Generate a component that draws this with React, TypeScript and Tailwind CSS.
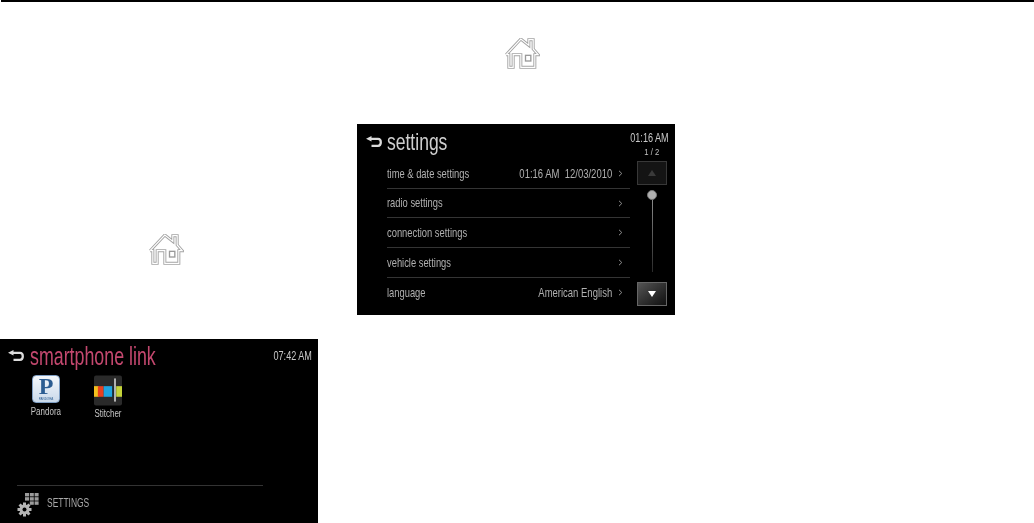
import React from 'react';

const sans = "font-['Liberation_Sans',Arial,sans-serif]";

function HomeIcon() {
  const outline = '2,50 46,3 70,22 70,5 83,5 83,33 98,50 88,50 88,88 46,88 46,50 23,50 23,88 10,88 10,50 2,50';
  return (
    <svg width="35" height="31" viewBox="0 0 102 93" fill="none" className="blur-[0.3px]">
      <polyline points={outline} stroke="#a3a3a3" strokeWidth="9" strokeLinejoin="miter" />
      <polyline points={outline} stroke="#ffffff" strokeWidth="3.5" strokeLinejoin="miter" />
      <rect x="60" y="52" width="16" height="17" stroke="#9a9a9a" strokeWidth="4" />
    </svg>
  );
}

function BackArrow() {
  return (
    <svg width="16" height="12" viewBox="0 0 16 12" fill="none" className="shrink-0">
      <path d="M0 2.8 L5.5 0 V5.6 Z" fill="#dcdcdc" />
      <path d="M4 2.8 H12 Q14.8 2.8 14.8 6.2 Q14.8 9.8 12 9.8 H5.5" stroke="#dcdcdc" strokeWidth="2.3" />
    </svg>
  );
}

function Chevron() {
  return (
    <svg width="5" height="7" viewBox="0 0 5 7" fill="none" className="shrink-0">
      <path d="M1 0.8 L3.8 3.5 L1 6.2" stroke="#8f8f8f" strokeWidth="1" />
    </svg>
  );
}

function PandoraIcon() {
  return (
    <div className="flex h-[28px] w-[28px] flex-col items-center rounded-[4px] border border-[#7f9fc4] bg-gradient-to-b from-[#f4f8fc] to-[#c9d9ea]">
      <span className="font-['Liberation_Serif',serif] text-[24px] leading-[21px] font-bold text-[#2b5d92]">P</span>
      <span className="w-full text-center text-[3px] leading-[4px] text-[#2b5d92]">PANDORA</span>
    </div>
  );
}

function StitcherIcon() {
  return (
    <svg width="28" height="31" viewBox="0 0 29 31">
      <rect width="29" height="31" rx="2" fill="#2a2a2a" />
      <rect y="11" width="5" height="11" fill="#f3c11e" />
      <rect x="4" y="11" width="6" height="11" fill="#e8401f" />
      <rect x="10" y="11" width="9" height="11" fill="#1fa5e0" />
      <rect x="19" y="11" width="3" height="11" fill="#1a2a33" />
      <rect x="23" y="11" width="6" height="11" fill="#c5d43a" />
      <rect x="21" y="3" width="1.5" height="24" fill="#e5e5e5" />
    </svg>
  );
}

function SettingsGlyph() {
  return (
    <svg width="22" height="24" viewBox="0 0 22 24" className="shrink-0">
      <g fill="#9c9c9c">
        <rect x="8" y="0" width="4" height="3.4" />
        <rect x="12.8" y="0" width="4" height="3.4" />
        <rect x="17.6" y="0" width="4" height="3.4" />
        <rect x="8" y="4.2" width="4" height="3.4" />
        <rect x="12.8" y="4.2" width="4" height="3.4" />
        <rect x="17.6" y="4.2" width="4" height="3.4" />
        <rect x="12.8" y="8.4" width="4" height="3.4" />
        <rect x="17.6" y="8.4" width="4" height="3.4" />
      </g>
      <g fill="#b5b5b5">
        <circle cx="7.5" cy="16.5" r="5" />
        <rect x="6" y="9.5" width="3" height="14" />
        <rect x="0.5" y="15" width="14" height="3" />
        <rect x="6" y="9.5" width="3" height="14" transform="rotate(45 7.5 16.5)" />
        <rect x="6" y="9.5" width="3" height="14" transform="rotate(-45 7.5 16.5)" />
      </g>
      <circle cx="7.5" cy="16.5" r="2" fill="#000" />
    </svg>
  );
}

const rows = [
  { label: 'time & date settings', value: '01:16 AM  12/03/2010' },
  { label: 'radio settings', value: '' },
  { label: 'connection settings', value: '' },
  { label: 'vehicle settings', value: '' },
  { label: 'language', value: 'American English' },
];

function SettingsPanel() {
  return (
    <div className={`flex h-[191px] w-[318px] bg-black blur-[0.5px] ${sans}`}>
      <div className="w-[275px]">
        <div className="flex h-[35px] items-center gap-[5px] pl-[9px]">
          <BackArrow />
          <h1 className="origin-left scale-x-[0.73] text-[24px] leading-[32px] whitespace-nowrap text-[#cfcfcf]">settings</h1>
        </div>
        <ul className="ml-[30px] w-[243px]">
          {rows.map((row, i) => (
            <li
              key={row.label}
              className={`flex h-[29.7px] items-center pr-[7px] text-[13px] text-[#b0b0b0] ${i < 4 ? 'border-b border-[#343434]' : ''}`}
            >
              <span className="min-w-0 flex-1 origin-left scale-x-[0.72] whitespace-nowrap">{row.label}</span>
              <span className="flex shrink-0 items-center gap-[6px]">
                <span className="origin-right scale-x-[0.73] whitespace-pre">{row.value}</span>
                <Chevron />
              </span>
            </li>
          ))}
        </ul>
      </div>
      <div className="flex w-[40px] flex-col items-center pt-[7px]">
        <span className="mr-[5px] scale-x-[0.7] text-[13px] leading-[14px] whitespace-nowrap text-[#c8c8c8]">01:16 AM</span>
        <span className="mt-[2px] scale-x-[0.85] text-[9px] leading-[10px] text-[#c0c0c0]">1 / 2</span>
        <button className="mt-[4px] flex h-[24px] w-[30px] shrink-0 items-center justify-center border border-[#383838] bg-[#141414]">
          <span className="h-0 w-0 border-x-[4px] border-b-[6px] border-x-transparent border-b-[#3a3a3a]" />
        </button>
        <div className="mt-[5px] h-[10px] w-[10px] shrink-0 rounded-full border border-[#777] bg-[#b0b0b0]" />
        <div className="h-[72px] w-[1px] shrink-0 bg-gradient-to-b from-[#8a8a8a] to-[#2a2a2a]" />
        <button className="mt-[10px] flex h-[24px] w-[30px] shrink-0 items-center justify-center border border-[#666] bg-gradient-to-br from-[#555] to-[#111]">
          <span className="h-0 w-0 border-x-[4px] border-t-[6px] border-x-transparent border-t-white" />
        </button>
      </div>
    </div>
  );
}

function SmartphonePanel() {
  return (
    <div className={`flex h-[184px] w-[318px] flex-col bg-black blur-[0.5px] ${sans}`}>
      <div className="flex h-[34px] items-center pr-[6px] pl-[8px]">
        <BackArrow />
        <h1 className="ml-[6px] origin-left scale-x-[0.685] text-[26px] leading-[32px] whitespace-nowrap text-[#c4486f]">smartphone link</h1>
        <span className="ml-auto origin-right scale-x-[0.7] text-[13px] whitespace-nowrap text-[#c8c8c8]">07:42 AM</span>
      </div>
      <div className="ml-[27px] flex h-[112px] items-start pt-[2px] text-[10px] text-[#c4c4c4]">
        <div className="flex w-[38px] flex-col items-center gap-[1px]">
          <PandoraIcon />
          <span className="scale-x-[0.8] whitespace-nowrap">Pandora</span>
        </div>
        <div className="ml-[24px] flex w-[38px] flex-col items-center">
          <StitcherIcon />
          <span className="scale-x-[0.8] whitespace-nowrap">Stitcher</span>
        </div>
      </div>
      <div className="ml-[17px] flex w-[246px] items-start gap-[8px] border-t border-[#333] pt-[7px] text-[13px] text-[#a8a8a8]">
        <SettingsGlyph />
        <span className="origin-left scale-x-[0.65] whitespace-nowrap">SETTINGS</span>
      </div>
    </div>
  );
}

export default function App() {
  return (
    <div className="h-[523px] w-[1034px] overflow-hidden bg-white">
      <div className="ml-[1px] h-[2px] bg-black" />
      <div className="flex justify-center pt-[36px] pl-[11px]">
        <HomeIcon />
      </div>
      <div className="flex">
        <div className="w-[318px] shrink-0 pt-[165px]">
          <div className="flex justify-center pl-[14px]">
            <HomeIcon />
          </div>
          <div className="mt-[74px]">
            <SmartphonePanel />
          </div>
        </div>
        <div className="ml-[39px] pt-[55px]">
          <SettingsPanel />
        </div>
      </div>
    </div>
  );
}
